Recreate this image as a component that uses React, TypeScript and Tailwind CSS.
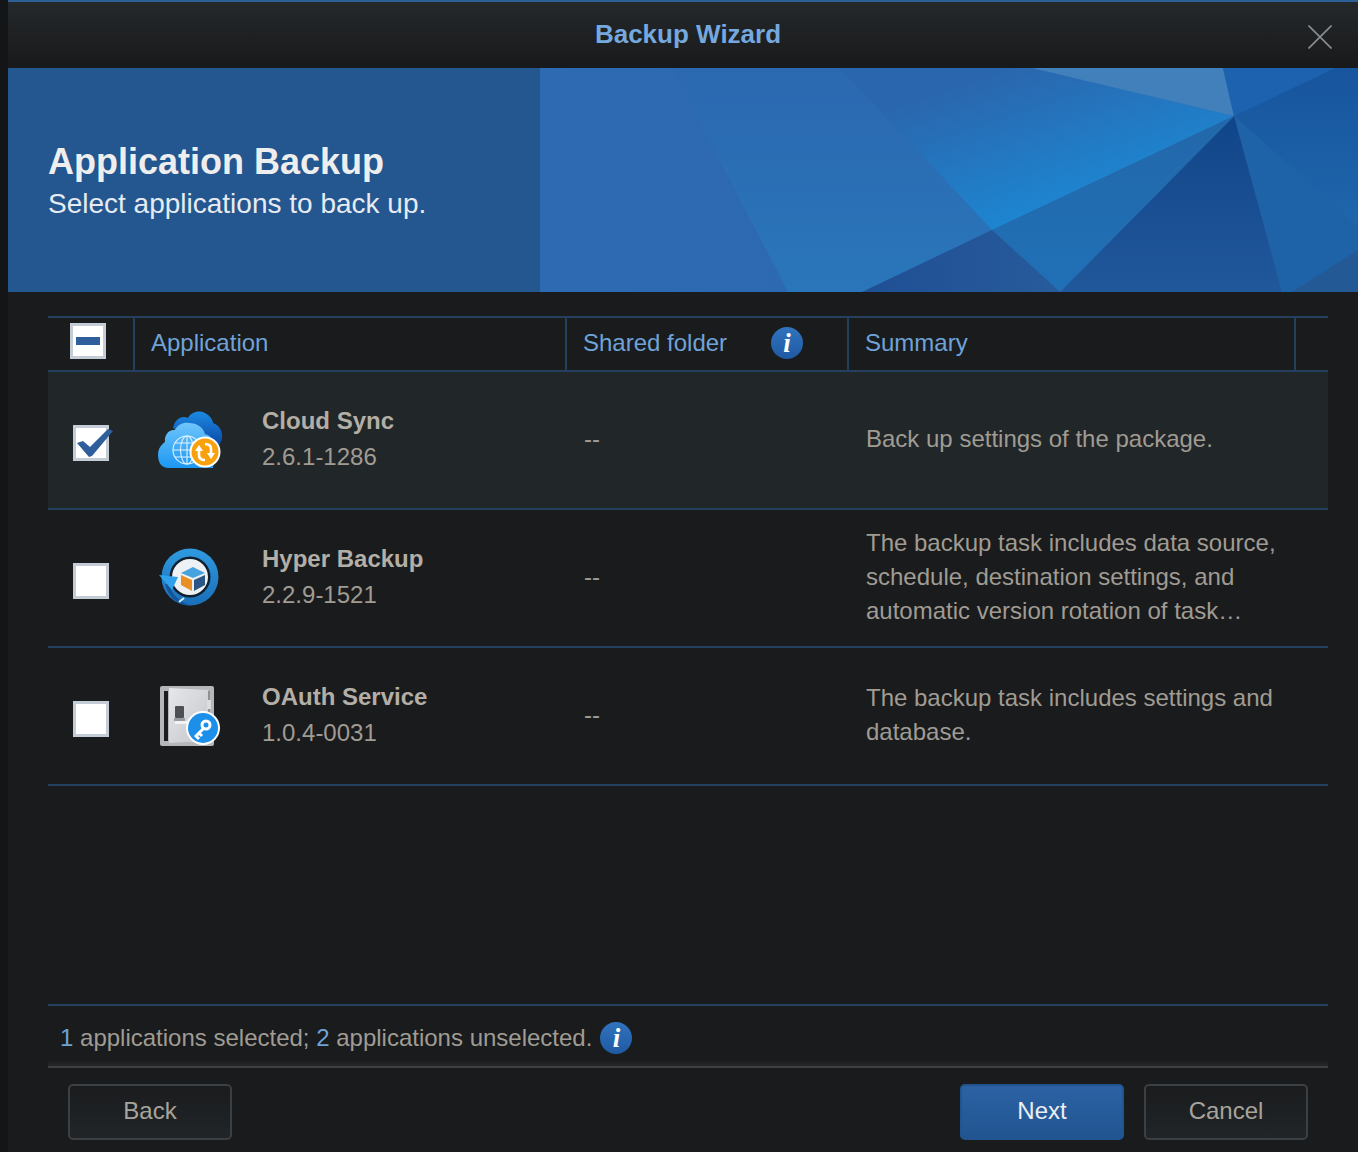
import type { ReactNode } from "react";

const apps = [
  {
    name: "Cloud Sync",
    version: "2.6.1-1286",
    summary: "Back up settings of the package.",
    checked: true,
  },
  {
    name: "Hyper Backup",
    version: "2.2.9-1521",
    summary:
      "The backup task includes data source, schedule, destination settings, and automatic version rotation of task…",
    checked: false,
  },
  {
    name: "OAuth Service",
    version: "1.0.4-0031",
    summary: "The backup task includes settings and database.",
    checked: false,
  },
];

function BannerArt() {
  return (
    <svg className="w-full h-full block" viewBox="540 68 818 224" preserveAspectRatio="none">
      <defs>
        <linearGradient id="bright" gradientUnits="userSpaceOnUse" x1="940" y1="90" x2="985" y2="225">
          <stop offset="0" stopColor="#2a66ad" />
          <stop offset="1" stopColor="#1e84cf" />
        </linearGradient>
        <linearGradient id="left" x1="0" y1="0" x2="0" y2="1">
          <stop offset="0" stopColor="#2b68b0" />
          <stop offset="1" stopColor="#2a76ba" />
        </linearGradient>
        <linearGradient id="far" x1="0" y1="0" x2="1" y2="0">
          <stop offset="0" stopColor="#2d6ab1" />
          <stop offset="0.7" stopColor="#2b68af" />
          <stop offset="1" stopColor="#2862a8" />
        </linearGradient>
        <linearGradient id="dark" x1="0" y1="0" x2="0" y2="1">
          <stop offset="0" stopColor="#114589" />
          <stop offset="1" stopColor="#21589b" />
        </linearGradient>
        <linearGradient id="mid" x1="0" y1="0" x2="0" y2="1">
          <stop offset="0" stopColor="#2268aa" />
          <stop offset="1" stopColor="#2070b6" />
        </linearGradient>
        <linearGradient id="low" x1="0" y1="0" x2="1" y2="0">
          <stop offset="0" stopColor="#1f4f95" />
          <stop offset="1" stopColor="#275b9b" />
        </linearGradient>
        <linearGradient id="side" x1="0" y1="0" x2="0" y2="1">
          <stop offset="0" stopColor="#17559e" />
          <stop offset="1" stopColor="#1f66ab" />
        </linearGradient>
      </defs>
      <rect x="540" y="68" width="818" height="224" fill="url(#far)" />
      <polygon points="672,68 840,68 992,230 862,292 788,292" fill="url(#left)" />
      <polygon points="840,68 1032,68 1234,116 992,230" fill="url(#bright)" />
      <polygon points="1032,68 1223,68 1234,116" fill="#4180bb" />
      <polygon points="1223,68 1335,68 1234,116" fill="#1c62ae" />
      <polygon points="1335,68 1358,68 1358,227 1234,116" fill="url(#side)" />
      <polygon points="1234,116 1358,227 1358,250 1292,292 1282,292" fill="#1e62a8" />
      <polygon points="1292,292 1358,250 1358,292" fill="#235a96" />
      <polygon points="1234,116 1282,292 1060,292" fill="url(#dark)" />
      <polygon points="1234,116 1060,292 992,230" fill="url(#mid)" />
      <polygon points="992,230 1060,292 862,292" fill="url(#low)" />
    </svg>
  );
}

function InfoDot() {
  return (
    <span className="w-8 h-8 rounded-full bg-gradient-to-b from-[#3173bd] to-[#1f5aa3] flex items-center justify-center shrink-0 text-white font-['Liberation_Serif',serif] italic font-bold text-[27px] leading-none">
      i
    </span>
  );
}

function CheckBox({ checked }: { checked?: boolean }) {
  return (
    <span className="relative block w-9 h-9 bg-white border-[3px] border-[#c4ccd6]">
      {checked && (
        <svg className="absolute left-[-3px] top-[-3px] overflow-visible" width="42" height="36" viewBox="0 0 42 36">
          <polygon points="4,18 10,16 17,22 35,4 40,6 19,31 16,32" fill="#2f5f9b" />
        </svg>
      )}
    </span>
  );
}

function CloudSyncIcon() {
  return (
    <svg width="66" height="62" viewBox="0 0 66 62" className="overflow-visible">
      <defs>
        <linearGradient id="cloudBack" x1="0" y1="0" x2="0" y2="1">
          <stop offset="0" stopColor="#1a8ae2" />
          <stop offset="1" stopColor="#0c3f9f" />
        </linearGradient>
        <linearGradient id="cloudFront" x1="0" y1="0" x2="0" y2="1">
          <stop offset="0" stopColor="#6fc5fb" />
          <stop offset="1" stopColor="#1c98f3" />
        </linearGradient>
      </defs>
      <path
        d="M16 20C18 10 26 7 31 10C34 4 42 2 48 5C54 8 56 13 56 15C62 17 66 23 65 30C64 36 60 40 56 42L30 30Z"
        fill="url(#cloudBack)"
      />
      <path
        d="M12 60C4 60 1 54 1 47C1 40 5 36 8 34C7 27 12 21 18 22C21 16 27 14 32 15C40 15 46 19 48 26C54 27 58 34 58 42L56 60Z"
        fill="url(#cloudFront)"
      />
      <g fill="none" stroke="#dff1ff" strokeWidth="1.1">
        <circle cx="30" cy="42" r="14" />
        <ellipse cx="30" cy="42" rx="6.5" ry="14" />
        <path d="M30 28v28M16 42h28M18 35h24M18 49h24" />
      </g>
      <circle cx="48" cy="44" r="15.5" fill="#fff" />
      <circle cx="48" cy="44" r="13.5" fill="#f9a10c" />
      <g fill="none" stroke="#fff" strokeWidth="2.6">
        <path d="M42 42v5c0 3 2 5 6 5" />
        <path d="M54 46v-5c0-3-2-5-6-5" />
      </g>
      <path d="M38 43l4-6 4 6zM50 45l4 6 4-6z" fill="#fff" />
    </svg>
  );
}

function HyperBackupIcon() {
  return (
    <svg width="66" height="62" viewBox="0 0 66 62">
      <defs>
        <linearGradient id="ring" x1="0" y1="0" x2="0" y2="1">
          <stop offset="0" stopColor="#2f9ae0" />
          <stop offset="1" stopColor="#1a6fb8" />
        </linearGradient>
      </defs>
      <circle cx="33" cy="31" r="28.5" fill="url(#ring)" />
      <path d="M8 38C11 51 21 59.5 33 59.5C30 58 14 52 13 38Z" fill="#14549a" />
      <circle cx="33" cy="31" r="20.5" fill="#10202f" />
      <circle cx="33" cy="31" r="18" fill="#eef1f3" />
      <polygon points="36,21 48,27 36,32 24,27" fill="#47a3de" />
      <polygon points="24,29 35,34 35,45 24,39" fill="#ea8f26" />
      <polygon points="37,34 48,29 48,39 37,45" fill="#2b5586" />
      <polygon points="2,29 21,31 15,44" fill="#2fa0e9" />
      <path d="M22 56l5-4" stroke="#d7ecfb" strokeWidth="2" />
    </svg>
  );
}

function OAuthIcon() {
  return (
    <svg width="66" height="62" viewBox="0 0 66 62" className="overflow-visible">
      <defs>
        <linearGradient id="door" x1="0" y1="0" x2="1" y2="1">
          <stop offset="0" stopColor="#e6e7ea" />
          <stop offset="1" stopColor="#c4c6cb" />
        </linearGradient>
      </defs>
      <g transform="translate(1 1)">
        <rect x="2" y="1" width="54" height="60" rx="2" fill="#b4b6ba" />
        <rect x="6" y="6" width="4" height="50" fill="#1b1c1e" />
        <rect x="49" y="6" width="3" height="50" fill="#8f9195" />
        <polygon points="11,3 50,5 50,56 11,58" fill="url(#door)" />
        <rect x="49" y="15" width="4" height="9" fill="#dcdde0" />
        <rect x="17" y="21" width="9" height="12" rx="1" fill="#4d5054" />
        <rect x="16" y="33" width="11" height="3" fill="#9a9ca0" />
        <rect x="17" y="36" width="12" height="3" fill="#f2f3f4" />
        <circle cx="45" cy="43" r="17" fill="#fff" />
        <circle cx="45" cy="43" r="15" fill="#1c8fe8" />
        <circle cx="48" cy="40" r="4" fill="none" stroke="#fff" strokeWidth="3" />
        <path d="M46 43l-9 9M41 48l3 3M38 51l3 3" stroke="#fff" strokeWidth="3" fill="none" />
      </g>
    </svg>
  );
}

const icons: ReactNode[] = [<CloudSyncIcon />, <HyperBackupIcon />, <OAuthIcon />];

function Button({ children, primary }: { children: ReactNode; primary?: boolean }) {
  return (
    <button
      className={
        primary
          ? "w-[164px] h-14 pb-[2px] rounded-[5px] border-2 border-[#20558f] bg-gradient-to-b from-[#2c62a4] to-[#215591] text-[#eceeef] text-[24px]"
          : "w-[164px] h-14 pb-[2px] rounded-[5px] border-2 border-[#3b4044] bg-gradient-to-b from-[#1a1c1e] to-[#212527] text-[#a8a39b] text-[24px]"
      }
    >
      {children}
    </button>
  );
}

export default function App() {
  return (
    <div className="w-[1358px] h-[1152px] overflow-hidden flex bg-[#191b1d] font-['Liberation_Sans',Arial,sans-serif]">
      <div className="w-2 bg-[#141517] shrink-0" />
      <div className="flex-1 min-w-0 flex flex-col">
        {/* Title bar */}
        <div className="h-[68px] shrink-0 relative border-t-2 border-[#2f5f97] bg-gradient-to-b from-[#25292b] to-[#18191b] flex items-center justify-center pl-[10px]">
          <span className="text-[#74a8de] font-bold text-[26px] mb-[2px]">Backup Wizard</span>
          <svg className="absolute right-[26px] top-[23px]" width="24" height="24" viewBox="0 0 24 24">
            <path d="M0.5 0.5L23.5 23.5M23.5 0.5L0.5 23.5" stroke="#8b8e90" strokeWidth="1.6" />
          </svg>
        </div>

        {/* Banner */}
        <div className="h-[224px] shrink-0 flex">
          <div className="w-[532px] bg-[#245690] pl-[40px] pt-[72px] shrink-0">
            <div className="text-[#eeeeee] font-bold text-[36px] leading-[44px]">Application Backup</div>
            <div className="text-[#e6ebf1] text-[28px] leading-[40px]">Select applications to back up.</div>
          </div>
          <div className="flex-1 min-w-0">
            <BannerArt />
          </div>
        </div>

        {/* Table */}
        <div className="flex-1 min-h-0 flex flex-col pl-10 pr-[30px] pt-6">
          <div className="h-14 shrink-0 flex border-y-2 border-[#24405c] text-[#6fa3d8] text-[24px]">
            <div className="w-[87px] flex items-center pl-[22px] pb-[6px] border-r-2 border-[#24405c]">
              <span className="relative block w-9 h-9 bg-white border-[3px] border-[#c4ccd6]">
                <span className="absolute left-[3px] right-[3px] top-[11px] h-[8px] bg-[#2e5f9c]" />
              </span>
            </div>
            <div className="w-[432px] flex items-center pl-4 pb-[2px] border-r-2 border-[#24405c]">Application</div>
            <div className="w-[282px] flex items-center pl-4 pb-[2px] border-r-2 border-[#24405c]">
              <span className="w-[188px]">Shared folder</span>
              <InfoDot />
            </div>
            <div className="w-[447px] flex items-center pl-4 pb-[2px] border-r-2 border-[#24405c]">Summary</div>
          </div>

          {apps.map((app, i) => (
            <div
              key={app.name}
              className={`h-[138px] shrink-0 flex items-center pb-[2px] border-b-2 border-[#24405c] text-[24px] text-[#a09b93] ${
                app.checked ? "bg-[#212628]" : ""
              }`}
            >
              <div className="w-[87px] pl-[25px] pt-2 shrink-0">
                <CheckBox checked={app.checked} />
              </div>
              <div className="w-[127px] pl-[22px] shrink-0">{icons[i]}</div>
              <div className="w-[322px] shrink-0 leading-9">
                <div className="font-bold text-[#b3aea6]">{app.name}</div>
                <div>{app.version}</div>
              </div>
              <div className="w-[282px] shrink-0">--</div>
              <div className="w-[440px] shrink-0 leading-[34px]">{app.summary}</div>
            </div>
          ))}

          <div className="flex-1" />

          {/* Status */}
          <div className="h-[62px] shrink-0 flex items-center gap-2 pl-3 pt-1 border-t-2 border-[#24405c] text-[24px] text-[#a09b93]">
            <span>
              <span className="text-[#6fa3d8]">1</span> applications selected;{" "}
              <span className="text-[#6fa3d8]">2</span> applications unselected.
            </span>
            <InfoDot />
          </div>
          <div className="h-[2px] shrink-0 bg-[#3d3f41] relative">
            <div className="absolute left-0 right-0 bottom-[2px] h-[6px] bg-gradient-to-b from-transparent to-[#26282a]" />
          </div>

          {/* Buttons */}
          <div className="h-[84px] shrink-0 flex items-start pt-4 px-5 gap-5">
            <Button>Back</Button>
            <div className="flex-1" />
            <Button primary>Next</Button>
            <Button>Cancel</Button>
          </div>
        </div>
      </div>
    </div>
  );
}
